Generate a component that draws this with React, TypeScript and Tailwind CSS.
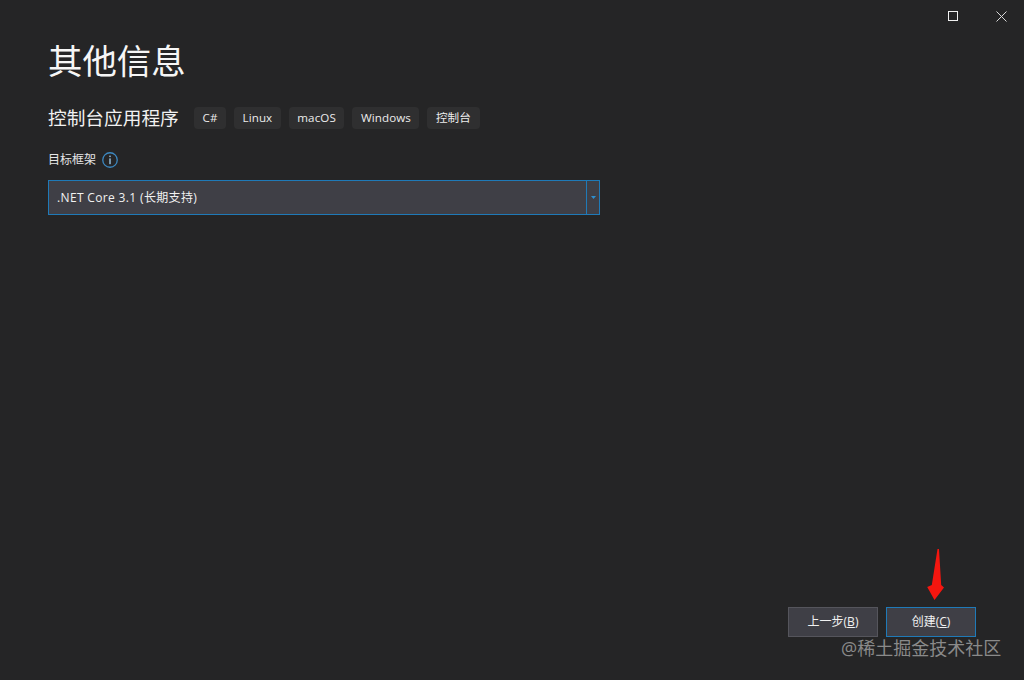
import React from "react";

const font = { fontFamily: '"Open Sans", "Noto Sans CJK SC", sans-serif' };

function Tag({ children }: { children: React.ReactNode }) {
  return (
    <span className="flex h-[22px] items-center rounded-[4px] bg-[#2f2f30] px-[8.5px] text-[11.6px] leading-none tracking-[0.1px] text-[#ececec]">
      {children}
    </span>
  );
}

export default function App() {
  return (
    <div style={font} className="relative flex h-[680px] w-[1024px] flex-col overflow-hidden bg-[#252526] text-[#f1f1f1]">
      <div className="flex h-[32px] items-center justify-end">
        <button className="flex h-[32px] w-[48px] items-center justify-center pr-[2px]">
          <svg width="10" height="10" viewBox="0 0 10 10" fill="none" stroke="#f1f1f1" strokeWidth="1">
            <rect x="0.5" y="0.5" width="9" height="9" />
          </svg>
        </button>
        <button className="flex h-[32px] w-[46px] items-center justify-center">
          <svg width="11" height="11" viewBox="0 0 11 11" fill="none" stroke="#d8d8d8" strokeWidth="1">
            <path d="M0.5 0.5L10.5 10.5M10.5 0.5L0.5 10.5" />
          </svg>
        </button>
      </div>

      <div className="flex flex-1 flex-col pl-[48px]">
        <h1 className="mt-[5px] h-[48px] text-[34.4px] leading-[48px] font-normal text-[#f6f6f6]">其他信息</h1>

        <div className="mt-[22px] flex h-[22px] items-center">
          <span className="w-[131px] text-[18.7px] leading-none whitespace-nowrap text-[#f1f1f1]">控制台应用程序</span>
          <div className="ml-[15px] flex gap-[8px]">
            <Tag>C#</Tag>
            <Tag>Linux</Tag>
            <Tag>macOS</Tag>
            <Tag>Windows</Tag>
            <Tag>控制台</Tag>
          </div>
        </div>

        <div className="mt-[20px] flex h-[22px] items-center">
          <span className="text-[12px] leading-none text-[#e6e6e6]">目标框架</span>
          <svg className="ml-[6px]" width="16" height="16" viewBox="0 0 16 16" fill="none">
            <circle cx="8" cy="8" r="7.25" stroke="#3c88c0" strokeWidth="1.3" />
            <rect x="7.3" y="3.6" width="1.4" height="1.5" fill="#9cc7e4" />
            <rect x="7.3" y="6.4" width="1.4" height="5.8" fill="#9cc7e4" />
          </svg>
        </div>

        <div className="mt-[9px] flex h-[35px] w-[552px] border border-[#1f7ab8] bg-[#3f3f46]">
          <div className="flex flex-1 items-center pl-[8px] text-[12px] tracking-[0.35px] text-[#f1f1f1]">.NET Core 3.1 (长期支持)</div>
          <div className="flex w-[13px] items-center justify-center border-l border-[#1f7ab8]">
            <svg width="5" height="3" viewBox="0 0 5 3">
              <path d="M0 0H5L2.5 3Z" fill="#2f8fd0" />
            </svg>
          </div>
        </div>

        <div className="mt-auto mb-[43px] flex justify-end gap-[8px] pr-[48px]">
          <button className="h-[30px] w-[90px] border border-[#55555c] bg-[#3f3f46] text-[12px] text-[#f1f1f1]">
            上一步(<span className="underline">B</span>)
          </button>
          <button className="h-[30px] w-[90px] border border-[#1f7ab8] bg-[#3f3f46] text-[12px] text-[#f1f1f1]">
            创建(<span className="underline">C</span>)
          </button>
        </div>
      </div>

      <svg className="absolute left-[926px] top-[548px]" width="20" height="54" viewBox="0 0 20 54">
        <path d="M11.5 1L13 1L15.2 37L18 39.5L8.5 52L1.2 39L5.8 37Z" fill="#f5160f" />
      </svg>

      <span className="absolute left-[841px] top-[635px] text-[18px] leading-[26px] text-[#8a8a8a]">@稀土掘金技术社区</span>
    </div>
  );
}
